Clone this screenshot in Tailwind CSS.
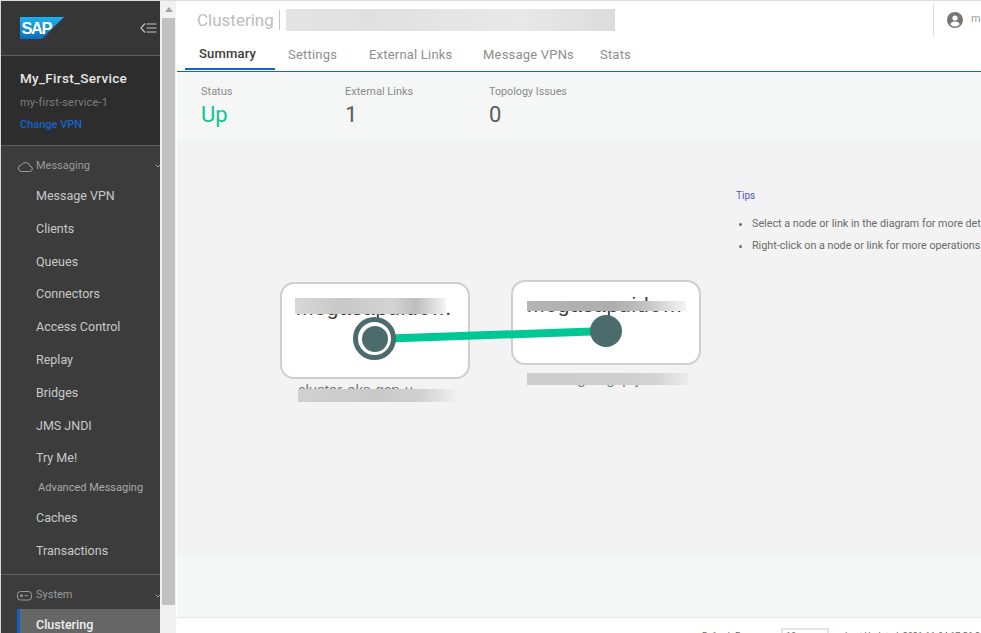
<!DOCTYPE html>
<html>
<head>
<meta charset="utf-8">
<script src="https://cdn.jsdelivr.net/npm/@tailwindcss/browser@4"></script>
</head>
<body class="h-[633px] w-[981px] overflow-hidden bg-white font-['Roboto','Liberation_Sans',sans-serif]">
<div class="flex h-[633px] w-[981px] overflow-hidden border-t border-[#dcdcdc]">
  <aside class="flex w-[160px] shrink-0 flex-col overflow-hidden border-l border-[#d8d8d8] bg-[#3c3c3c]">
    <div class="box-border flex h-[55px] shrink-0 items-center justify-between border-b border-[#5f5f5f] bg-[#363636] pl-[19px] pr-[2px]">
      <svg width="44" height="22" viewBox="0 0 44 22">
        <defs><linearGradient id="sap" x1="0" y1="0" x2="0" y2="1"><stop offset="0" stop-color="#1eb1f0"/><stop offset="1" stop-color="#0a6cc0"/></linearGradient></defs>
        <path d="M0 0H44L22 22H0Z" fill="url(#sap)"/>
        <text x="1.500" y="16.500" font-family="Liberation Sans" font-size="16.500" font-weight="700" fill="#fff" textLength="31">SAP</text>
      </svg>
      <svg width="18" height="12" viewBox="0 0 18 12" fill="none" stroke="#c4c4c4" stroke-width="1.200">
        <path d="M5 1.500 1 6l4 4.500M6.500 2H16.500M6.500 6H16.500M6.500 10H16.500"/>
      </svg>
    </div>
    <div class="box-border flex h-[90px] shrink-0 flex-col border-b border-[#5f5f5f] bg-[#2d2d2d] pl-[19px] pt-[13px]">
      <div class="text-[13.500px] leading-[18px] font-medium tracking-[0.3px] text-[#e6e6e6]">My_First_Service</div>
      <div class="mt-[9px] text-[11px] leading-[14px] tracking-[0.2px] text-[#7d7d7d]">my-first-service-1</div>
      <div class="mt-[8px] text-[11px] leading-[14px] font-medium text-[#1763cf]">Change VPN</div>
    </div>
    <div class="box-border flex h-[429px] shrink-0 flex-col border-b border-[#5f5f5f]">
      <div class="flex h-[34px] shrink-0 items-center gap-[3px] pl-[16px] pt-[6px] text-[11px] text-[#9b9b9b]">
        <svg width="16" height="11" viewBox="0 0 16 11" fill="none" stroke="#9b9b9b" stroke-width="1"><path d="M4 10.500H12.500a2.700 2.700 0 0 0 .3-5.400A4.500 4.500 0 0 0 4.500 3.800 3.400 3.400 0 0 0 4 10.500Z"/></svg>
        <span class="flex-1">Messaging</span>
        <svg width="6" height="4" viewBox="0 0 6 4" fill="none" stroke="#a0a0a0" class="mr-[-1px]"><path d="M.5.500 3 3 5.500.500"/></svg>
      </div>
      <nav class="flex flex-col pl-[35px] text-[12.500px] text-[#c9c9c9]">
        <a class="flex h-[32.800px] items-center">Message VPN</a>
        <a class="flex h-[32.800px] items-center">Clients</a>
        <a class="flex h-[32.800px] items-center">Queues</a>
        <a class="flex h-[32.800px] items-center">Connectors</a>
        <a class="flex h-[32.800px] items-center">Access Control</a>
        <a class="flex h-[32.800px] items-center">Replay</a>
        <a class="flex h-[32.800px] items-center">Bridges</a>
        <a class="flex h-[32.800px] items-center">JMS JNDI</a>
        <a class="flex h-[32px] items-center">Try Me!</a>
        <a class="flex h-[28px] items-center pl-[2px] text-[11px] text-[#a9a9a9]">Advanced Messaging</a>
        <a class="flex h-[32.800px] items-center">Caches</a>
        <a class="flex h-[32.800px] items-center">Transactions</a>
      </nav>
    </div>
    <div class="flex h-[34px] shrink-0 items-center gap-[3px] pl-[16px] pt-[7px] text-[11px] text-[#9b9b9b]">
      <svg width="16" height="10" viewBox="0 0 16 10" fill="none" stroke="#9b9b9b"><rect x=".5" y=".5" width="14" height="8.500" rx="3"/><circle cx="4.500" cy="4.700" r="1" fill="#9b9b9b"/><path d="M7.500 4.700H11"/></svg>
      <span class="flex-1">System</span>
      <svg width="6" height="4" viewBox="0 0 6 4" fill="none" stroke="#a0a0a0" class="mr-[-1px]"><path d="M.5.500 3 3 5.500.500"/></svg>
    </div>
    <div class="ml-[16px] flex h-[32px] shrink-0 items-center border-l-[3px] border-[#0f62c5] bg-[#666666] pl-[16px] text-[12.500px] font-medium text-[#f0f0f0]">Clustering</div>
  </aside>
  <div class="flex w-[16px] shrink-0 flex-col bg-[#f1f1f1] pl-[2px]">
    <div class="flex h-[17px] w-[13px] shrink-0 items-center justify-center"><div class="h-0 w-0 border-x-[4px] border-b-[5px] border-x-transparent border-b-[#a3a3a3]"></div></div>
    <div class="h-[587px] w-[13px] bg-[#c1c1c1]"></div>
  </div>
  <main class="flex min-w-0 flex-1 flex-col pl-[1px]">
    <header class="box-border h-[71px] shrink-0 border-b border-[#1464b8] bg-white">
      <div class="flex h-[38px] items-center pl-[20px]">
        <span class="text-[17px] leading-[24px] text-[#bdbdbd]">Clustering</span>
        <span class="ml-[5px] h-[20px] w-[1px] bg-[#c4c4c4]"></span>
        <div class="ml-[6px] h-[22px] w-[329px] bg-[linear-gradient(90deg,#e4e4e4,#e0e0e0_25%,#e9e9e9_70%,#dcdcdc)]"></div>
        <div class="ml-auto flex h-[34px] w-[48px] shrink-0 items-center gap-[8px] overflow-hidden border-l border-[#dfdfdf] pl-[13px] -mt-[1px]">
          <svg width="16" height="16" viewBox="0 0 16 16" class="shrink-0"><circle cx="8" cy="8" r="8" fill="#777"/><circle cx="8" cy="6" r="2.600" fill="#fff"/><path d="M3.200 12.200c1-2 3-2.700 4.800-2.700s3.800.7 4.800 2.700A6 6 0 0 1 8 14.500a6 6 0 0 1-4.800-2.300Z" fill="#fff"/></svg>
          <span class="text-[11px] text-[#9a9a9a]">m</span>
        </div>
      </div>
      <nav class="flex h-[32px] items-start pl-[8px] text-[13px] tracking-[0.2px] text-[#8e8e8e]">
        <a class="box-border flex h-[31px] w-[90px] shrink-0 items-center justify-center border-b-2 border-[#1464b8] pr-[5px] font-medium text-[#3a3a3a]">Summary</a>
        <a class="ml-[13px] flex h-[31px] w-[81px] shrink-0 items-center pt-[1px]">Settings</a>
        <a class="flex h-[31px] w-[114px] shrink-0 items-center pt-[1px]">External Links</a>
        <a class="flex h-[31px] w-[117px] shrink-0 items-center pt-[1px]">Message VPNs</a>
        <a class="flex h-[31px] shrink-0 items-center pt-[1px]">Stats</a>
      </nav>
    </header>
    <section class="flex h-[69px] shrink-0 bg-[#f5f7f6] pl-[24px] pt-[13px]">
      <div class="w-[144px]">
        <div class="text-[11px] leading-[14px] text-[#8a8a8a]">Status</div>
        <div class="mt-[3px] text-[22px] leading-[26px] text-[#0fc594]">Up</div>
      </div>
      <div class="w-[144px]">
        <div class="text-[11px] leading-[14px] text-[#8a8a8a]">External Links</div>
        <div class="mt-[3px] text-[22px] leading-[26px] text-[#5c5c5c]">1</div>
      </div>
      <div>
        <div class="text-[10.750px] leading-[14px] text-[#8a8a8a]">Topology Issues</div>
        <div class="mt-[3px] text-[22px] leading-[26px] text-[#5c5c5c]">0</div>
      </div>
    </section>
    <section class="relative h-[413px] shrink-0 overflow-hidden bg-[#f3f3f3]">
      <div class="absolute left-[103px] top-[141px] box-border h-[97px] w-[190px] rounded-[14px] border-2 border-[#cfcfcf] bg-white"></div>
      <div class="absolute left-[334px] top-[139px] box-border h-[85px] w-[190px] rounded-[14px] border-2 border-[#cfcfcf] bg-white"></div>

      <div class="absolute left-[119px] top-[155px] font-['Liberation_Sans',sans-serif] text-[21px] leading-[24px] tracking-[0.8px] whitespace-nowrap text-[#3d3d3d]">megasapulde…</div>
      <div class="absolute left-[350px] top-[152px] font-['Liberation_Sans',sans-serif] text-[21px] leading-[24px] tracking-[0.8px] whitespace-nowrap text-[#3d3d3d]">megasapuide…</div>
      <div class="absolute left-[121px] top-[240px] font-['Liberation_Sans',sans-serif] text-[15px] leading-[18px] whitespace-nowrap text-[#777]">cluster-aks-gcp-u</div>
      <div class="absolute left-[351px] top-[229px] font-['Liberation_Sans',sans-serif] text-[15px] leading-[18px] whitespace-nowrap text-[#777]">cluster-gke-gcp-j</div>

      <div class="absolute left-[118px] top-[157px] h-[16px] w-[151px] bg-[linear-gradient(90deg,#d8d8d8,#c8c8c8_30%,#d4d4d4_65%,#bdbdbd_80%,#f4f4f4)]"></div>
      <div class="absolute left-[350px] top-[160px] h-[10px] w-[159px] bg-[linear-gradient(90deg,#b4b4b4,#aeaeae_55%,#c4c4c4_75%,#f4f4f4)]"></div>
      <div class="absolute left-[121px] top-[248px] h-[13px] w-[162px] bg-[linear-gradient(90deg,#d0d0d0,#cacaca_50%,#d0d0d0_75%,#f4f4f4)]"></div>
      <div class="absolute left-[350px] top-[232px] h-[12px] w-[161px] bg-[linear-gradient(90deg,#cccccc,#cfcfcf_60%,#d4d4d4_80%,#ececec)]"></div>

      <svg class="absolute left-[170px] top-[160px]" width="290" height="70" viewBox="0 0 290 70">
        <path d="M28 38 259 30" stroke="#00c895" stroke-width="8"/>
      </svg>
      <div class="absolute left-[176px] top-[176px] box-border flex h-[43px] w-[43px] items-center justify-center rounded-full border-[5px] border-[#4b6b6c] bg-white">
        <div class="h-[26px] w-[26px] rounded-full bg-[#4b6b6c]"></div>
      </div>
      <div class="absolute left-[413px] top-[174px] h-[32px] w-[32px] rounded-full bg-[#4b6b6c]"></div>

      <div class="absolute left-[559px] top-[48px] w-[300px]">
        <div class="text-[10px] leading-[14px] text-[#4a55c8]">Tips</div>
        <ul class="mt-[10px] list-disc pl-[16px] text-[10.750px] leading-[22px] whitespace-nowrap text-[#6b6b6b]">
          <li>Select a node or link in the diagram for more details</li>
          <li>Right-click on a node or link for more operations</li>
        </ul>
      </div>
    </section>
    <section class="box-border h-[64px] shrink-0 border-b border-[#e6e8e7] bg-[#f5f7f6]"></section>
    <footer class="flex h-[16px] shrink-0 items-start overflow-hidden bg-white pl-[525px] pt-[10px] text-[9px] leading-[12px] whitespace-nowrap text-[#6b6b6b]">
      <span class="mt-[2px] w-[79px] shrink-0">Refresh Every</span>
      <span class="box-border h-[20px] w-[48px] shrink-0 border-2 border-[#e4e4e4] pl-[3px]">10 sec</span>
      <span class="ml-[16px] mt-[2px] shrink-0">Last Updated: 2021-11-04 17:56:24</span>
    </footer>
  </main>
</div>
</body>
</html>
